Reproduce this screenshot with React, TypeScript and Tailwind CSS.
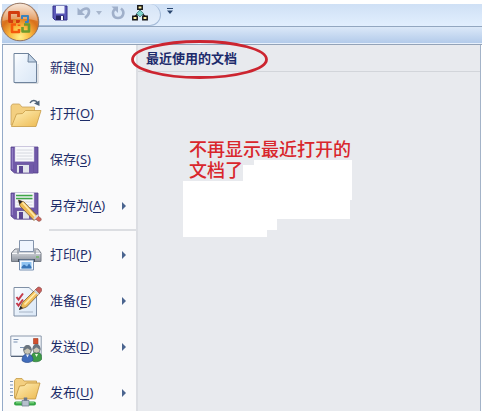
import type { ReactNode } from "react";

interface MenuEntry {
  label: string;
  accessKey: string;
  icon: ReactNode;
  hasSubmenu?: boolean;
}

const NewIcon = () => (
  <svg className="size-8" viewBox="0 0 32 32" aria-hidden="true">
    <defs>
      <linearGradient id="sheet" x1="0" y1="0" x2="1" y2="1">
        <stop offset="0" stopColor="#ffffff" />
        <stop offset=".3" stopColor="#edf4fc" />
        <stop offset="1" stopColor="#dae7f6" />
      </linearGradient>
    </defs>
    <path d="M5 31.200h23V12" fill="none" stroke="#c9ccd2" />
    <path d="M4 1.500h14.500l8 8.500v20.500H4z" fill="url(#sheet)" stroke="#6f839c" />
    <path d="M18.500 1.500 18 10h8.500z" fill="#c2d3e6" stroke="#6f839c" strokeLinejoin="round" />
  </svg>
);

const OpenIcon = () => (
  <svg className="size-8" viewBox="0 0 32 32" aria-hidden="true">
    <defs>
      <linearGradient id="folder" x1="0" y1="0" x2="1" y2="1">
        <stop offset="0" stopColor="#fff0b8" />
        <stop offset="1" stopColor="#edb950" />
      </linearGradient>
    </defs>
    <path d="M1 27V8l1.500-2h7l2.500 3h12.500v6L5 28z" fill="#f3cf80" stroke="#c9a25a" strokeWidth=".8" />
    <path d="M1.500 28.500 6.500 16l6-.5 3-3H31L26 28.500z" fill="url(#folder)" stroke="#c79a45" strokeWidth=".8" strokeLinejoin="round" />
    <path d="M20 5c2-3.500 6-3 7.500 0" fill="none" stroke="#4f6279" strokeWidth="1.500" />
    <path d="m24 5.500 5.500 2.500V2.500z" fill="#4f6279" />
  </svg>
);

const Floppy = () => (
  <>
    <path d="M1 3h27v26H4.500L1 26z" fill="#7059a8" stroke="#54408c" strokeWidth=".8" />
    <path d="M5 2.500h19v15H5z" fill="#f8f9fc" stroke="#c0bbd6" strokeWidth=".5" />
    <path d="M6.500 6h16M6.500 9h16M6.500 12h16M6.500 15h16" stroke="#ccd0d8" strokeWidth=".8" />
    <path d="M6.500 20.500H23V29H6.500z" fill="#e3e5ed" stroke="#5b4893" strokeWidth=".7" />
    <path d="M9 22h4v7H9z" fill="#5a4693" />
    <path d="M19 20.500h4V29h-4z" fill="#7059a8" />
    <path d="M2.300 4v21" stroke="#9a88cb" />
  </>
);

const SaveIcon = () => (
  <svg className="size-8" viewBox="0 0 32 32" aria-hidden="true">
    <Floppy />
  </svg>
);

const SaveAsIcon = () => (
  <svg className="size-8" viewBox="0 0 32 32" aria-hidden="true">
    <Floppy />
    <path d="M6 5.500h16.500M6 8.500h16.500" stroke="#3fa648" strokeWidth="1.400" />
    <path d="m8.500 10 5.500 2 14 14.500-4 4L10 16z" fill="#efbb55" stroke="#7a5c38" strokeWidth=".8" />
    <path d="m12.500 12.500 13.500 15" stroke="#ffe9a8" strokeWidth="1.800" />
    <path d="m8.500 10 1 4.500 3-3z" fill="#24242b" />
    <path d="m27.500 25.500 3.500 3c1 2-1.500 3.500-3 2.500l-3.500-3z" fill="#d6655a" stroke="#8f5752" strokeWidth=".7" />
    <path d="m24 29 4-4" stroke="#d9dde4" strokeWidth="2" />
  </svg>
);

const PrintIcon = () => (
  <svg className="size-8" viewBox="0 0 32 32" aria-hidden="true">
    <defs>
      <linearGradient id="printer" x1="0" y1="0" x2="0" y2="1">
        <stop offset="0" stopColor="#e8eaed" />
        <stop offset="1" stopColor="#8a919c" />
      </linearGradient>
    </defs>
    <path d="M5 10h23l3 4v8.500H1.500V14z" fill="url(#printer)" stroke="#747b86" />
    <path d="M9.500 1.500h14v11h-14z" fill="#eff5fe" stroke="#8494ac" />
    <path d="M2 14.500h28.500" stroke="#f6f7f9" />
    <path d="M8 11v4M25 11v4" stroke="#777e88" />
    <path d="M8 20h17v3H8z" fill="#49515d" />
    <path d="M26 18h3" stroke="#73b864" strokeWidth="1.500" />
    <path d="M9.500 21h14v10h-14z" fill="#f3f9ff" stroke="#7790b2" />
    <path d="M11.500 23h10v6.500h-10z" fill="#8fc3f1" />
    <path d="m11.500 28 2.500-2.500 3 2 2-3 2.500 3.500v1.500h-10z" fill="#3a76b8" />
  </svg>
);

const PrepareIcon = () => (
  <svg className="size-8" viewBox="0 0 32 32" aria-hidden="true">
    <path d="M4 2.500h15l7.500 7v21.500H4z" fill="url(#sheet)" stroke="#8090a6" />
    <path d="m6.500 12 2 2.500 4.500-6M6.500 18l2 2.500 4.500-6" fill="none" stroke="#c43a4a" strokeWidth="2" />
    <path d="M9 27h14" stroke="#a7b4c6" />
    <path d="m9.500 24.500 3-7L26 4l4 4-13.500 14z" fill="#f0bd58" stroke="#7b5e38" strokeWidth=".8" />
    <path d="M14.500 19.500 27.500 6" stroke="#ffedb0" strokeWidth="1.800" />
    <path d="m9 25 1.500-4 2.500 2z" fill="#26262d" />
    <path d="m25.500 4.500 2-2c2-1.500 5.500 1.500 4 3.500l-2 2.500z" fill="#cc5d59" stroke="#895653" strokeWidth=".7" />
    <path d="m24.500 5.500 4 4" stroke="#cdd4dd" strokeWidth="1.800" />
  </svg>
);

const SendIcon = () => (
  <svg className="size-8" viewBox="0 0 32 32" aria-hidden="true">
    <path d="M.8 5h30.400v20H.8z" fill="#f5f8fc" stroke="#8b98ab" />
    <path d="M1 25.500h13" stroke="#56647a" />
    <path d="M3.500 8.500h5M3.500 11h4M10 16.500h8" stroke="#7890b1" />
    <path d="M23.500 7.500H28V13h-4.500z" fill="#d2502f" stroke="#a23b20" strokeWidth=".6" />
    <path d="M21.500 29.500V26c0-3 2-5 5-5s5 2 5 5v2.500c-2 2.500-7 3-10 1z" fill="#3f9c46" stroke="#25703a" strokeWidth=".7" />
    <circle cx="26.500" cy="18.500" r="3.600" fill="#c9c5b4" stroke="#56616b" strokeWidth=".7" />
    <path d="M22.500 18.500c-.5-7.500 8.500-7.500 8 0-2 0-3-2-4-2s-2 2-4 2z" fill="#69747f" />
    <path d="m25 23 1.500 3 1.500-3z" fill="#e9f7e4" />
    <path d="M12 29.500c0-4 2-6.500 5.500-6.500s5.500 3 5.500 6c-2 3-8 3.500-11 .5z" fill="#426cba" stroke="#294d8d" strokeWidth=".7" />
    <circle cx="17.500" cy="19.500" r="3.800" fill="#c9c5b4" stroke="#56616b" strokeWidth=".7" />
    <path d="M13.300 19.500c-.5-7.500 8.900-7.500 8.400 0-2 0-3-2-4.200-2s-2.200 2-4.200 2z" fill="#69747f" />
    <path d="m16 23.500 1.500 3 1.500-3z" fill="#e6eefb" />
  </svg>
);

const PublishIcon = () => (
  <svg className="size-8" viewBox="0 0 32 32" aria-hidden="true">
    <path d="M0 4.500h3M0 8h3M0 11.500h3M0 15h3M0 18.500h3" stroke="#7e95b5" />
    <path d="M4.500 21V3.500L6 1.500h6l2 2.500h12.500v6L7 21z" fill="#f3cf80" stroke="#c49a45" strokeWidth=".8" />
    <path d="M5 22 9.500 9l5-.5 2-2.500H30l-4.500 16z" fill="url(#folder)" stroke="#c0923b" strokeWidth=".8" strokeLinejoin="round" />
    <path d="M15.500 20.500v4" stroke="#69758a" strokeWidth="3.500" />
    <path d="M6 26.500h18" stroke="#35a545" strokeWidth="4" strokeLinecap="round" />
    <path d="M6 25.800h18" stroke="#8fe08f" />
    <path d="M12 23.500h7v5.500h-7z" fill="#b6c0cd" stroke="#69758a" strokeWidth=".7" />
  </svg>
);

const OfficeLogo = () => (
  <svg className="size-10" viewBox="0 0 40 40" aria-hidden="true">
    <defs>
      <radialGradient id="orb" cx=".5" cy=".9" r=".9">
        <stop offset="0" stopColor="#fff08a" />
        <stop offset=".3" stopColor="#fbbb3f" />
        <stop offset=".6" stopColor="#d9711c" />
        <stop offset="1" stopColor="#dd9a62" />
      </radialGradient>
      <linearGradient id="orbShine" x1="0" y1="0" x2="0" y2="1">
        <stop offset="0" stopColor="#fff" stopOpacity=".75" />
        <stop offset="1" stopColor="#fff" stopOpacity=".25" />
      </linearGradient>
    </defs>
    <circle cx="20" cy="20" r="18.800" fill="url(#orb)" stroke="#8f7261" />
    <path d="M2.500 19C4-4 36-4 37.500 19c-9-3-25-3-35 0z" fill="url(#orbShine)" />
    <g fill="none" strokeLinejoin="round">
      <path d="M13 19.500H9.500v-9h9V15M18.500 18v1.500H16" stroke="#d23c0e" strokeWidth="2.800" />
      <path d="M22 17v-3h6v6h-3" stroke="#3b83bd" strokeWidth="2" />
      <path d="M16 22.500h-4v7.500h7v-3M19 24v-1.500" stroke="#f4590c" strokeWidth="2.600" />
      <path d="M24 22.500h5v7h-6.500V25" stroke="#6d9a2c" strokeWidth="2.600" />
    </g>
  </svg>
);

const QuickSaveIcon = () => (
  <svg className="size-4" viewBox="0 0 16 16" aria-hidden="true">
    <path d="M1 1h14v14H3l-2-2z" fill="#5b58b8" stroke="#34328a" />
    <path d="M4 1h8.500v7.500H4z" fill="#eef3fd" />
    <path d="M4 10.500h8V15H4z" fill="#25245f" />
    <path d="M9 11h2v4H9z" fill="#fff" />
  </svg>
);

const UndoIcon = () => (
  <svg className="size-4" viewBox="0 0 16 16" aria-hidden="true">
    <path d="M4 7c5-5 9-4 9-.5 0 3-2 5-4 6.500" fill="none" stroke="#a0b0ca" strokeWidth="2.600" />
    <path d="M1.500 2.500v7.500H9z" fill="#a0b0ca" />
  </svg>
);

const RedoIcon = () => (
  <svg className="size-4" viewBox="0 0 16 16" aria-hidden="true">
    <path d="M5.500 3.500C1 7 3 13 8 13s7.500-6 3-9.500" fill="none" stroke="#a0b0ca" strokeWidth="2.600" />
    <path d="M1.500 1.500H8V8z" fill="#a0b0ca" />
  </svg>
);

const DiagramIcon = () => (
  <svg className="size-4" viewBox="0 0 16 16" aria-hidden="true">
    <path d="M8 3v4M6 8.500l-3 3M10 8.500l3 3" stroke="#222" strokeWidth="1.500" />
    <path d="M5.800.8h4.400v3.400H5.800zM.8 11.300h4.400v3.500H.8zM10.800 11.300h4.400v3.500h-4.400z" fill="#fff1a2" stroke="#171717" strokeWidth="1.500" />
    <path d="m8 5 3.500 3.500L8 12 4.500 8.500z" fill="#7ed3cd" stroke="#3f7d7b" strokeWidth=".8" />
  </svg>
);

const FILE_ENTRIES: MenuEntry[] = [
  { label: "新建", accessKey: "N", icon: <NewIcon /> },
  { label: "打开", accessKey: "O", icon: <OpenIcon /> },
  { label: "保存", accessKey: "S", icon: <SaveIcon /> },
  { label: "另存为", accessKey: "A", icon: <SaveAsIcon />, hasSubmenu: true },
];

const SHARE_ENTRIES: MenuEntry[] = [
  { label: "打印", accessKey: "P", icon: <PrintIcon />, hasSubmenu: true },
  { label: "准备", accessKey: "E", icon: <PrepareIcon />, hasSubmenu: true },
  { label: "发送", accessKey: "D", icon: <SendIcon />, hasSubmenu: true },
  { label: "发布", accessKey: "U", icon: <PublishIcon />, hasSubmenu: true },
];

const MenuItem = ({ label, accessKey, icon, hasSubmenu }: MenuEntry) => (
  <li>
    <button type="button" className="flex h-[46px] w-full items-center pr-2.5 pl-[7px] text-left">
      {icon}
      <span className="ml-2 flex-1 whitespace-nowrap">
        {label}(<u className="underline-offset-2">{accessKey}</u>)
      </span>
      {hasSubmenu && (
        <svg className="h-2 w-1" viewBox="0 0 4 8" aria-hidden="true">
          <path d="M0 0v8l4-4z" fill="#4a648f" />
        </svg>
      )}
    </button>
  </li>
);

const TitleBar = () => (
  <header className="relative">
    <div className="flex h-[23px] border-b border-[#93a7c0] bg-linear-to-b from-[#cfe0f5] to-[#e2effe]">
      <div className="ml-9 flex w-[123px] items-center rounded-r-full border-r border-b border-[#a5bbd8] bg-linear-to-b from-[#d6e4f6] to-[#e5effb] pb-1 pl-3.5">
        <button type="button" aria-label="保存">
          <QuickSaveIcon />
        </button>
        <button type="button" aria-label="撤消" className="ml-2">
          <UndoIcon />
        </button>
        <button type="button" aria-label="撤消选项" className="ml-1">
          <svg className="h-1 w-1.5" viewBox="0 0 6 4" aria-hidden="true">
            <path d="M0 0h6L3 4z" fill="#a8b6cc" />
          </svg>
        </button>
        <button type="button" aria-label="重复" className="ml-2">
          <RedoIcon />
        </button>
        <button type="button" aria-label="组织结构图" className="ml-1.5">
          <DiagramIcon />
        </button>
      </div>
      <button type="button" aria-label="自定义快速访问工具栏" className="ml-1.5 pb-2">
        <svg className="h-1.5 w-1.5" viewBox="0 0 6 6" aria-hidden="true">
          <path d="M0 0h6v1H0zM0 2.500h6L3 6z" fill="#29466f" />
        </svg>
      </button>
    </div>
    <div className="h-4 bg-linear-to-b from-[#dbe8f8] to-[#b3cbea]" />
    <div className="h-0.5 border-b border-[#93a3b8] bg-[#e8f1fc]" />
    <button type="button" aria-label="Office 按钮" className="absolute -top-0.5 -left-0.5 rounded-full">
      <OfficeLogo />
    </button>
  </header>
);

const Note = () => (
  <div className="relative mt-[67px] ml-[45px] h-[100px] w-[170px]">
    <svg className="absolute top-0 left-0 h-[100px] w-[170px]" viewBox="0 0 170 100" aria-hidden="true">
      <path d="M0 42h60V26h11v-5h98v40h-2v19H94v11H84v7H0z" fill="#ffffff" />
    </svg>
    <p className="relative ml-1.5 text-[18px] leading-[21px] font-medium text-[#d9262c]">
      <span className="block whitespace-nowrap">不再显示最近打开的</span>
      <span className="block">文档了</span>
    </p>
  </div>
);

const RecentDocuments = () => (
  <main className="mr-px min-w-0 flex-1 border-r border-[#a3b3c8] bg-[#e8eaee]">
    <div className="relative h-[27px] border-b border-[#d2d5da]">
      <h1 className="pt-1 pl-2 text-[13px] leading-[18px] font-bold text-[#1c2a6b]">
        最近使用的文档
      </h1>
      <svg className="absolute -top-1.5 -left-2 h-10 w-[140px]" viewBox="0 0 140 40" aria-hidden="true">
        <ellipse cx="69.500" cy="20.500" rx="67" ry="18" fill="none" stroke="#cc2530" strokeWidth="2.800" />
      </svg>
    </div>
    <Note />
  </main>
);

export default function App() {
  return (
    <div className="flex min-h-screen flex-col overflow-hidden bg-white pt-1 pl-0.5 font-['Noto_Sans','Noto_Sans_CJK_SC',sans-serif] text-[13px] text-[#1e2d69]">
      <TitleBar />
      <div className="flex flex-1">
        <nav className="w-[136px] shrink-0 border-r-2 border-l border-r-[#dcdee3] border-l-[#94aac8] bg-[#fafafb]">
          <ul>
            {FILE_ENTRIES.map((entry) => (
              <MenuItem key={entry.accessKey} {...entry} />
            ))}
          </ul>
          <hr className="mb-px ml-[46px] border-t-2 border-[#dcdee2]" />
          <ul>
            {SHARE_ENTRIES.map((entry) => (
              <MenuItem key={entry.accessKey} {...entry} />
            ))}
          </ul>
        </nav>
        <RecentDocuments />
      </div>
    </div>
  );
}
